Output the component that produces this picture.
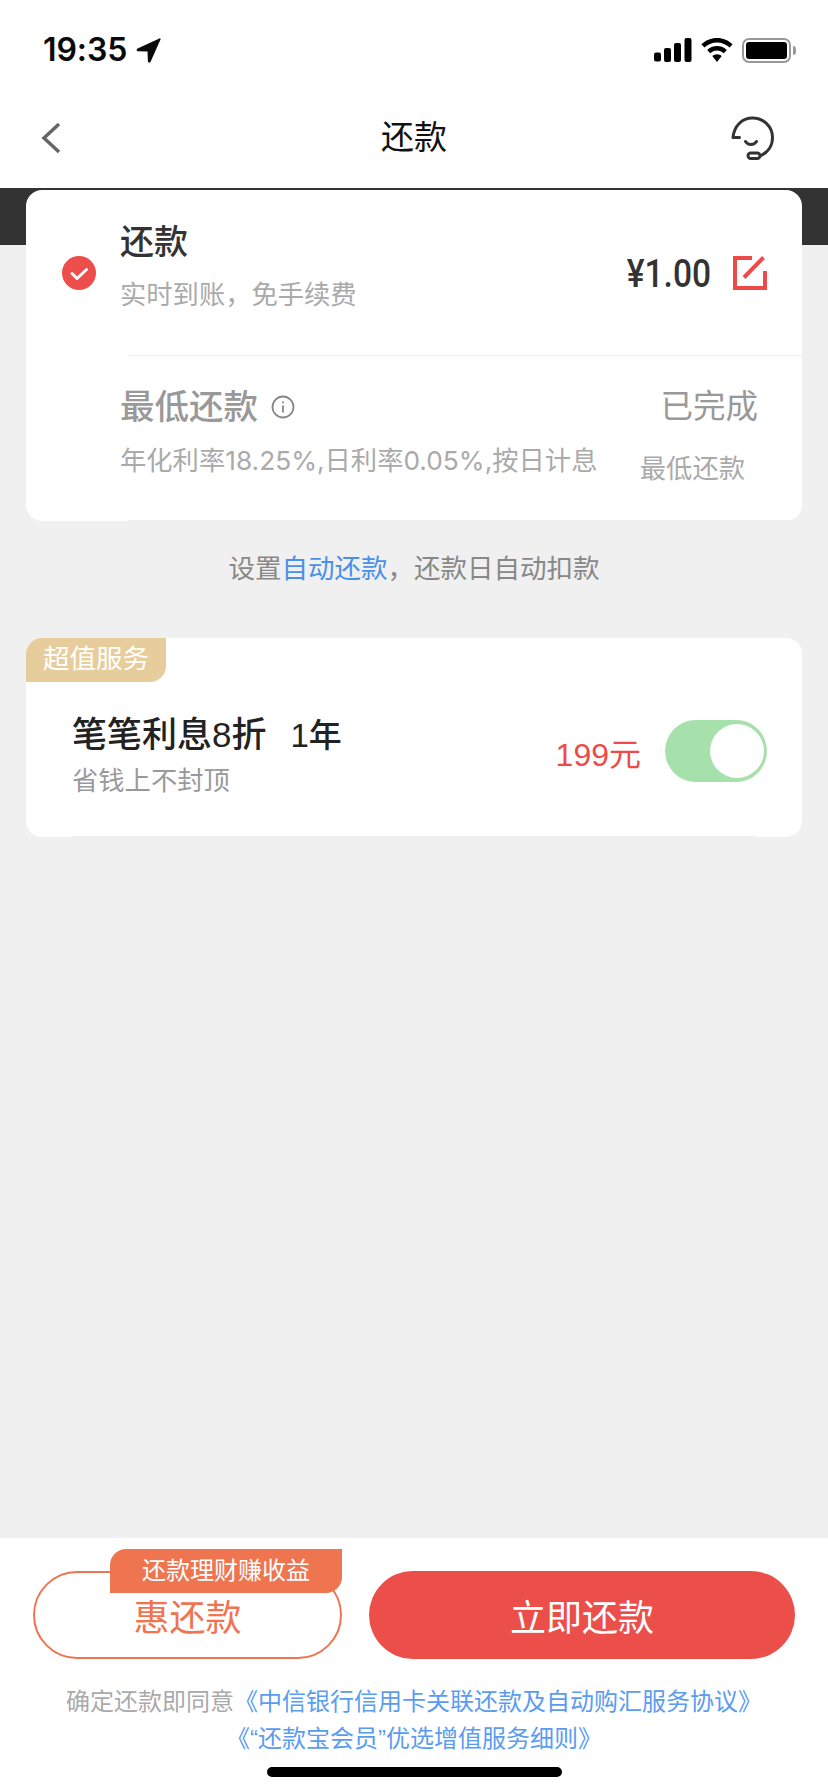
<div class="page">
  <header class="head">
    <div class="status">
      <div class="time-wrap">
        <span class="time">19:35</span>
        <svg class="loc" viewBox="0 0 25 25"><path d="M23.4.4 1.6 10.6c-1.5.8-1.2 2.6.5 2.7l9.400.3.400 9.600c.1 1.600 2 1.900 2.700.5L24.500 1.500c.4-.9-.3-1.500-1.100-1.100Z"/></svg>
      </div>
      <div class="sys">
        <svg class="sig" viewBox="0 0 38 24"><rect x="0" y="14.500" width="7" height="9" rx="2"/><rect x="10" y="10" width="7" height="14" rx="2"/><rect x="20" y="5" width="7" height="19" rx="2"/><rect x="30.500" y="0" width="7" height="24" rx="2"/></svg>
        <svg class="wifi" viewBox="0 0 32 24"><path d="M16 0C10 0 4.500 2.300.4 6.300l3 3.300C6.700 6.400 11.100 4.400 16 4.400s9.300 2 12.600 5.200l3-3.300C27.500 2.300 22 0 16 0Z"/><path d="M16 8c-3.800 0-7.200 1.500-9.800 3.900l3 3.300C11 13.500 13.400 12.400 16 12.400s5 1.100 6.800 2.800l3-3.300C23.200 9.500 19.800 8 16 8Z"/><path d="M16 16.200c-1.800 0-3.400.7-4.700 1.900L16 24l4.700-5.900c-1.300-1.200-2.900-1.900-4.700-1.900Z"/></svg>
        <div class="batt"><div class="batt-fill"></div></div>
        <div class="nub"></div>
      </div>
    </div>
    <nav class="nav">
      <svg class="back" viewBox="0 0 20 32"><path d="M18 2 3 16l15 14" /></svg>
      <h1 class="nav-title">还款</h1>
      <svg class="agent" viewBox="0 0 44 44"><path d="M2 21.500h6.500M2 21.500C3 10 11 2 21.500 2 32.500 2 41.500 10.500 41.500 21.500c0 8.500-5 15-11.500 18M14.500 25.500c2.500 4 8.500 4 11 0" /><rect x="17" y="37" width="12" height="5.500" rx="2.700"/></svg>
    </nav>
  </header>

  <main class="main">
    <section class="card first">
      <div class="pay">
        <svg class="check" viewBox="0 0 34 34"><circle cx="17" cy="17" r="17" fill="#ed4d4b"/><path d="M10 17.500l5 5 9.500-9" fill="none" stroke="#fff" stroke-width="3" stroke-linecap="round" stroke-linejoin="round"/></svg>
        <div class="pay-text">
          <div class="t-main">还款</div>
          <div class="t-sub">实时到账，免手续费</div>
        </div>
        <div class="amount">¥1.00</div>
        <svg class="edit" viewBox="0 0 34 34"><path d="M19 2H2v30h30V15M11 21.500 30.500 1.500" /></svg>
      </div>
      <div class="rule"></div>
      <div class="min">
        <div>
          <div class="min-title">最低还款 <svg class="info" viewBox="0 0 24 24"><circle cx="12" cy="12" r="10.500"/><path d="M12 10.500v7M12 6.500v1.800"/></svg></div>
          <div class="min-sub">年化利率18.25%,日利率0.05%,按日计息</div>
        </div>
        <div class="min-right">
          <div class="done">已完成</div>
          <div class="done-sub">最低还款</div>
        </div>
      </div>
      <div class="rule low"></div>
    </section>

    <p class="auto">设置<span class="blue">自动还款</span>，还款日自动扣款</p>

    <section class="card second">
      <div class="tag">超值服务</div>
      <div class="svc">
        <div class="svc-text">
          <div class="svc-title">笔笔利息8折<span class="term">1年</span></div>
          <div class="svc-sub">省钱上不封顶</div>
        </div>
        <div class="price">199元</div>
        <div class="toggle"><div class="knob"></div></div>
      </div>
      <div class="svc-rule"></div>
    </section>
  </main>

  <footer class="foot">
    <div class="btns">
      <button class="btn-a">惠还款<span class="promo">还款理财赚收益</span></button>
      <button class="btn-b">立即还款</button>
    </div>
    <p class="terms">确定还款即同意<span class="link">《中信银行信用卡关联还款及自动购汇服务协议》</span><br/><span class="link">《“还款宝会员”优选增值服务细则》</span></p>
    <div class="home"></div>
  </footer>
</div>

<style>
  :global(body) {
    margin: 0;
    background: #f0f0f0;
    font-family: "Liberation Sans", "Noto Sans CJK SC", sans-serif;
  }
  .page {
    width: 828px;
    height: 1792px;
    display: flex;
    flex-direction: column;
    overflow: hidden;
  }
  .head { background: #fff; height: 188px; flex: none; }
  .status {
    height: 40px;
    padding: 30px 32px 18px 43px;
    display: flex;
    justify-content: space-between;
    align-items: center;
  }
  .time-wrap { display: flex; align-items: center; gap: 9px; }
  .time {
    font-family: Inter, "Liberation Sans", sans-serif;
    font-size: 32px;
    font-weight: 600;
    line-height: 40px;
    color: #0a0a0a;
    letter-spacing: -0.1px;
  }
  .loc { width: 25px; height: 25px; fill: #0a0a0a; }
  .sys { display: flex; align-items: center; }
  .sig { width: 38px; height: 24px; fill: #000; }
  .wifi { width: 32px; height: 24px; fill: #000; margin-left: 9px; }
  .batt {
    width: 49px;
    height: 25px;
    margin-left: 9px;
    box-sizing: border-box;
    border: 2px solid #999;
    border-radius: 7px;
    padding: 2px;
  }
  .batt-fill { height: 100%; width: 100%; background: #000; border-radius: 3px; }
  .nub { width: 3px; height: 9px; background: #999; border-radius: 0 3px 3px 0; margin-left: 2px; }
  .nav {
    height: 100px;
    padding: 0 41px;
    display: grid;
    grid-template-columns: 1fr auto 1fr;
    align-items: center;
  }
  .back { width: 20px; height: 32px; fill: none; stroke: #666; stroke-width: 3.500; }
  .nav-title { margin: 0; font-size: 33px; font-weight: 400; color: #111; line-height: 44px; }
  .agent { width: 44px; height: 44px; margin-right: 12px; fill: none; stroke: #333; stroke-width: 3; stroke-linecap: round; justify-self: end; }
  .main {
    flex: 1;
    padding: 2px 26px 0;
    background: linear-gradient(#333 57px, #f0f0f0 57px);
  }
  .card { background: #fff; border-radius: 16px; position: relative; overflow: hidden; }
  .first { height: 331px; display: flex; flex-direction: column; }
  .pay { height: 165px; display: flex; align-items: center; padding: 0 35px 0 36px; }
  .check { width: 34px; height: 34px; flex: none; }
  .pay-text { margin-left: 24px; flex: 1; align-self: flex-start; padding-top: 30px; }
  .t-main { font-size: 34px; line-height: 44px; color: #333; font-weight: 500; }
  .t-sub { font-size: 26.300px; line-height: 36px; color: #aaa; margin-top: 13px; }
  .amount {
    font-family: Roboto, sans-serif;
    font-size: 39px;
    font-weight: 500;
    color: #333;
    line-height: 44px;
    padding-top: 2px;
    transform: scaleX(0.86);
    transform-origin: right center;
  }
  .edit { width: 34px; height: 34px; margin-left: 22px; fill: none; stroke: #ee4a4a; stroke-width: 4; }
  .rule { height: 1px; background: #eee; margin-left: 102px; flex: none; }
  .rule.low { background: #f0f0f0; margin-top: auto; }
  .min { display: flex; justify-content: space-between; padding: 29px 44px 0 94px; }
  .min-title { font-size: 34.500px; line-height: 44px; color: #999; font-weight: 500; display: flex; align-items: center; gap: 13px; }
  .info { width: 24px; height: 24px; fill: none; stroke: #888; stroke-width: 1.800; }
  .min-sub { font-family: Inter, "Noto Sans CJK SC", sans-serif; font-size: 26.300px; line-height: 36px; color: #aaa; margin-top: 14px; white-space: nowrap; }
  .min-right { display: flex; flex-direction: column; align-items: flex-end; }
  .done { font-size: 32.500px; line-height: 44px; color: #999; }
  .done-sub { font-size: 26.300px; line-height: 36px; color: #aaa; margin: 22px 13px 0 0; }
  .auto { margin: 30px 0 51px; text-align: center; font-size: 26.500px; line-height: 36px; color: #888; }
  .blue { color: #4a90e8; }
  .second { height: 199px; display: flex; flex-direction: column; }
  .tag {
    position: absolute;
    left: 0;
    top: 0;
    width: 140px;
    height: 44px;
    box-sizing: border-box;
    padding-left: 17px;
    background: #e7cd9c;
    border-radius: 0 0 16px 0;
    color: #fff;
    font-size: 26.500px;
    line-height: 42px;
  }
  .svc { display: flex; align-items: flex-start; padding: 75px 35px 0 46px; }
  .svc-text { flex: 1; }
  .svc-title { font-size: 35px; line-height: 44px; font-weight: 500; color: #222; white-space: nowrap; }
  .term { margin-left: 24px; font-size: 33px; }
  .svc-sub { font-size: 26.300px; line-height: 36px; color: #999; margin-top: 5px; }
  .price { font-size: 32px; line-height: 40px; color: #ee4a4a; margin-top: 22px; }
  .toggle {
    width: 102px;
    height: 62px;
    margin: 7px 0 0 24px;
    background: #a6e0ab;
    border-radius: 31px;
    position: relative;
  }
  .knob {
    position: absolute;
    right: 3px;
    top: 4px;
    width: 54px;
    height: 54px;
    background: #fff;
    border-radius: 50%;
  }
  .svc-rule { height: 1px; background: #eee; margin: auto 46px 0; }
  .foot { height: 254px; flex: none; background: #fff; box-sizing: border-box; padding-top: 33px; }
  .btns { display: flex; align-items: center; gap: 27px; padding: 0 33px; }
  .btn-a, .btn-b {
    font-family: inherit;
    font-size: 36px;
    padding: 0;
    border-radius: 44px;
    box-sizing: border-box;
  }
  .btn-a {
    position: relative;
    width: 309px;
    height: 88px;
    background: #fff;
    border: 2px solid #f0744f;
    color: #f0744f;
  }
  .btn-b { width: 426px; height: 88px; background: #ec4e4a; border: 0; color: #fff; }
  .promo {
    position: absolute;
    right: -2px;
    top: -24px;
    width: 232px;
    height: 44px;
    line-height: 44px;
    background: #ee7550;
    color: #fff;
    font-size: 24px;
    text-align: center;
    border-radius: 16px 0 16px 0;
  }
  .terms { margin: 24px 0 0; text-align: center; font-size: 24px; line-height: 37px; color: #aaa; white-space: nowrap; }
  .link { color: #5a9cf0; }
  .home { width: 295px; height: 10px; border-radius: 5px; background: #000; margin: 10px auto 0; }
</style>
